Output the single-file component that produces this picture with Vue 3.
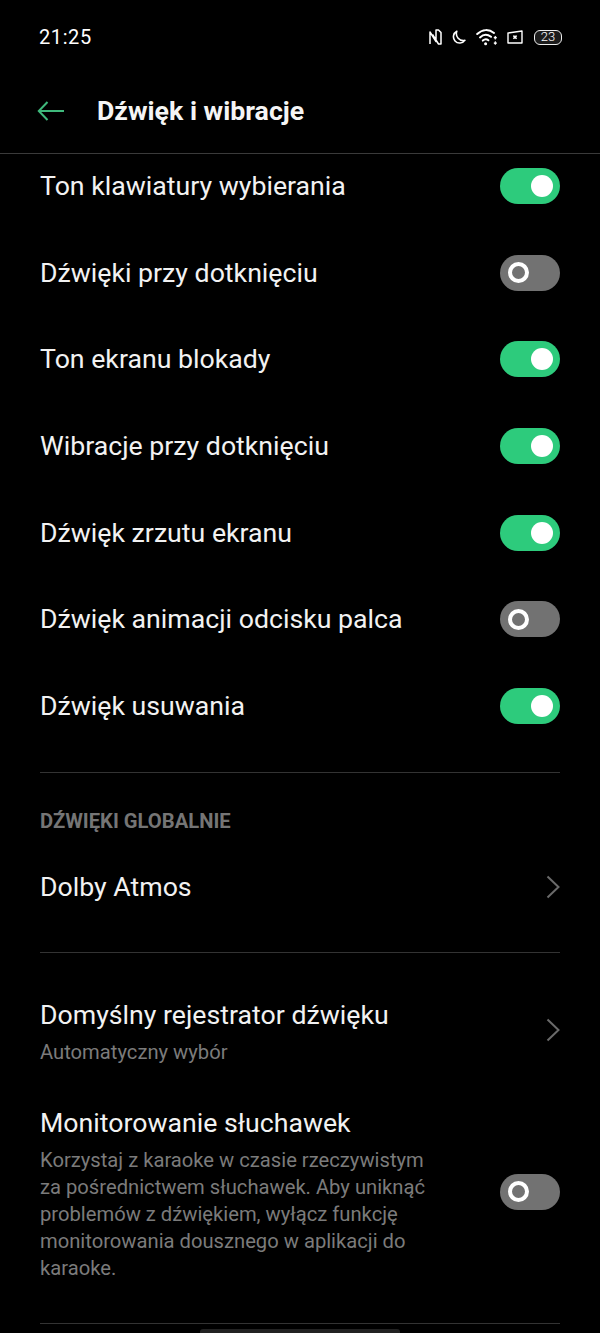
<template>
  <div class="screen">
    <div class="status">
      <span class="time">21:25</span>
      <div class="status__icons">
        <svg width="13" height="16" viewBox="0 0 13 16" fill="none" stroke="#fff" stroke-width="1.5" stroke-linejoin="round">
          <path d="M1 15V3L7 12.5V1H9.5L12 3.5V15H9.5L3.5 5.5" />
        </svg>
        <svg width="15" height="15" viewBox="0 0 15 15" fill="none" stroke="#fff" stroke-width="1.6" stroke-linejoin="round">
          <path d="M5.8 1.2A6.3 6.3 0 1 0 13.9 10.4 7 7 0 0 1 5.8 1.2Z" />
        </svg>
        <svg width="22" height="18" viewBox="0 0 22 18" fill="none" stroke="#fff" stroke-width="2" stroke-linecap="round">
          <path d="M1.2 6C6.5 1 13 1 18 5" />
          <path d="M4 9.4C7.4 6.2 11.6 6.2 15 8.8" />
          <path d="M6.8 12.6C8.6 11 10.8 11 12.4 12.3" />
          <circle cx="9.6" cy="15.8" r="1.5" fill="#fff" stroke="none" />
          <path d="M19.3 8.8V11.6M17.9 10.2L19.3 8.6 20.7 10.2M19.3 13.2V16M17.9 14.6L19.3 16.2 20.7 14.6" stroke-width="1.1" stroke-linecap="butt" />
        </svg>
        <svg width="16" height="14" viewBox="0 0 16 14" fill="none" stroke="#fff">
          <path d="M1 3L15 1V13H1Z" stroke-width="1.4" stroke-linejoin="round" />
          <path d="M6.4 5.6L9.6 8.8M9.6 5.6L6.4 8.8" stroke-width="1.5" />
        </svg>
        <div class="battery">23</div>
      </div>
    </div>

    <header class="header">
      <svg class="back" width="28" height="22" viewBox="0 0 28 22" fill="none" stroke="#3fb97c" stroke-width="2">
        <path d="M27 11H2M10.5 2L1.8 11 10.5 20" />
      </svg>
      <h1>Dźwięk i wibracje</h1>
    </header>

    <div class="toggles">
      <div v-for="item in toggles" :key="item.label" class="row">
        <span class="label">{{ item.label }}</span>
        <span :class="['switch', { 'switch--on': item.on }]"><i></i></span>
      </div>
    </div>

    <div class="divider divider--first"></div>
    <div class="section">DŹWIĘKI GLOBALNIE</div>
    <div class="row row--link">
      <span class="label">Dolby Atmos</span>
      <svg class="chevron" width="14" height="24" viewBox="0 0 14 24" fill="none" stroke="#6a6a6a" stroke-width="2"><path d="M1.5 1.5L12.5 12 1.5 22.5" /></svg>
    </div>
    <div class="divider divider--second"></div>

    <div class="recorder">
      <div>
        <div class="label">Domyślny rejestrator dźwięku</div>
        <div class="sub">Automatyczny wybór</div>
      </div>
      <svg class="chevron chevron--up" width="14" height="24" viewBox="0 0 14 24" fill="none" stroke="#6a6a6a" stroke-width="2"><path d="M1.5 1.5L12.5 12 1.5 22.5" /></svg>
    </div>

    <div class="monitor">
      <div class="monitor__text">
        <div class="label">Monitorowanie słuchawek</div>
        <div class="desc">Korzystaj z karaoke w czasie rzeczywistym<br />za pośrednictwem słuchawek. Aby uniknąć<br />problemów z dźwiękiem, wyłącz funkcję<br />monitorowania dousznego w aplikacji do<br />karaoke.</div>
      </div>
      <span class="switch switch--up"><i></i></span>
    </div>

    <div class="divider divider--last"></div>
    <div class="home"></div>
  </div>
</template>

<script setup>
const toggles = [
  { label: 'Ton klawiatury wybierania', on: true },
  { label: 'Dźwięki przy dotknięciu', on: false },
  { label: 'Ton ekranu blokady', on: true },
  { label: 'Wibracje przy dotknięciu', on: true },
  { label: 'Dźwięk zrzutu ekranu', on: true },
  { label: 'Dźwięk animacji odcisku palca', on: false },
  { label: 'Dźwięk usuwania', on: true }
];
</script>

<style>
html, body {
  margin: 0;
  background: #000;
}
</style>

<style scoped>
.screen {
  width: 600px;
  height: 1333px;
  overflow: hidden;
  background: #000;
  color: #f2f2f2;
  font-family: Roboto, "Noto Sans", sans-serif;
}

.status {
  height: 74px;
  padding: 0 38px 0 39px;
  display: flex;
  align-items: center;
  justify-content: space-between;
  box-sizing: border-box;
}

.time {
  font-size: 20px;
  letter-spacing: 0.6px;
  color: #fff;
}

.status__icons {
  display: flex;
  align-items: center;
  gap: 9.5px;
}

.battery {
  width: 28px;
  height: 15px;
  margin-left: 1.5px;
  box-sizing: border-box;
  border: 1.5px solid #eee;
  border-radius: 6px;
  background: #1c1c1c;
  font-size: 13px;
  font-weight: 300;
  line-height: 12px;
  text-align: center;
  color: #fff;
}

.header {
  height: 80px;
  padding: 0 0 5px 37px;
  box-sizing: border-box;
  display: flex;
  align-items: center;
  border-bottom: 1px solid #3a3a3a;
}

.back {
  margin-right: 32px;
}

h1 {
  margin: 0;
  font-size: 26.7px;
  font-weight: 700;
  color: #f5f5f5;
}

.toggles {
  display: flex;
  flex-direction: column;
  gap: 22.67px;
}

.row {
  height: 64px;
  margin: 0 40px;
  display: flex;
  align-items: center;
  justify-content: space-between;
}

.label {
  font-size: 26.7px;
  line-height: 32px;
  color: #f2f2f2;
}

.switch {
  flex: none;
  width: 60px;
  height: 36px;
  border-radius: 18px;
  background: #727272;
  display: flex;
  align-items: center;
  padding-left: 8px;
  box-sizing: border-box;
}

.switch i {
  width: 21px;
  height: 21px;
  border: 4px solid #fff;
  border-radius: 50%;
  box-sizing: border-box;
}

.switch--on {
  background: #2dcb7c;
  padding-left: 31px;
}

.switch--on i {
  width: 22px;
  height: 22px;
  background: #fff;
  border: none;
}

.switch--up {
  margin-top: -5px;
}

.divider {
  height: 1px;
  margin: 0 40px;
  background: #333;
}

.divider--first {
  margin-top: 34px;
}

.divider--second {
  margin-top: 33px;
}

.divider--last {
  margin-top: 41px;
}

.section {
  margin: 37px 40px 0;
  font-size: 20.2px;
  line-height: 22px;
  font-weight: 700;
  color: #757575;
}

.row--link {
  margin-top: 23px;
}

.recorder {
  margin: 46px 40px 0;
  display: flex;
  align-items: center;
  justify-content: space-between;
}

.chevron--up {
  margin-top: -3px;
}

.sub {
  margin-top: 9px;
  font-size: 20.2px;
  line-height: 24px;
  color: #7b7b7b;
}

.monitor {
  margin: 43px 40px 0;
  display: flex;
  align-items: center;
  justify-content: space-between;
}

.desc {
  margin-top: 8px;
  font-size: 20.2px;
  line-height: 27px;
  color: #7b7b7b;
}

.home {
  width: 200px;
  height: 5px;
  margin: 5px auto 0;
  border-radius: 3px 3px 0 0;
  background: #222;
}
</style>
